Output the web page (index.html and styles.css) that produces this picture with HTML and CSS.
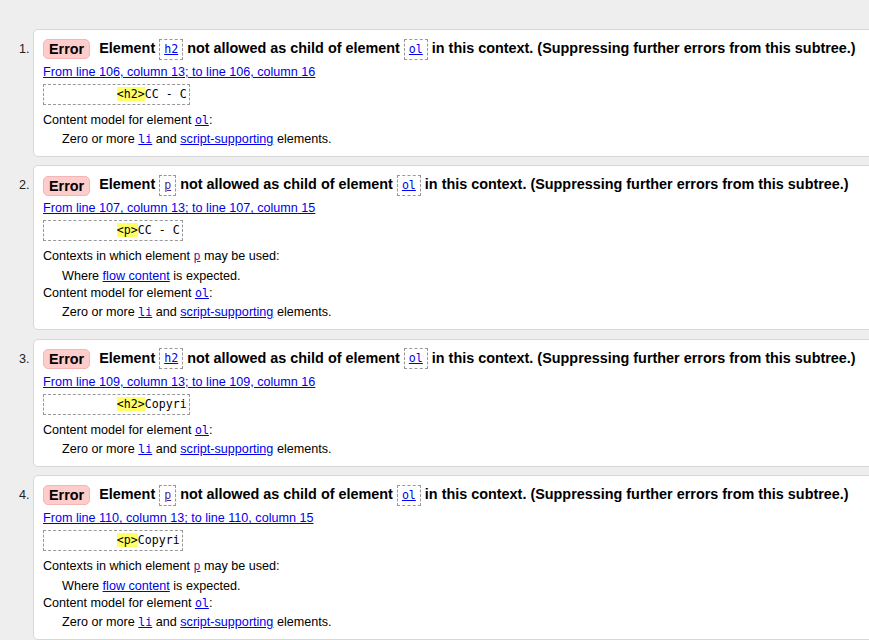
FILE: index.html
```html
<!DOCTYPE html>
<html>
<head>
<meta charset="utf-8">
<title>Validation messages</title>
<link rel="stylesheet" href="styles.css">
</head>
<body>
<ol class="messages">
  <li class="msg">
    <p class="head"><strong class="badge">Error</strong><span class="title">Element <code class="box"><a href="#">h2</a></code> not allowed as child of element <code class="box"><a href="#">ol</a></code> in this context. (Suppressing further errors from this subtree.)</span></p>
    <p class="loc"><a href="#">From line 106, column 13; to line 106, column 16</a></p>
    <code class="extract">          <b>&lt;h2&gt;</b>CC - C</code>
    <dl class="details">
      <dt>Content model for element <code><a href="#">ol</a></code>:</dt>
      <dd>Zero or more <code><a href="#">li</a></code> and <a href="#">script-supporting</a> elements.</dd>
    </dl>
  </li>
  <li class="msg">
    <p class="head"><strong class="badge">Error</strong><span class="title">Element <code class="box"><a href="#" class="visited">p</a></code> not allowed as child of element <code class="box"><a href="#">ol</a></code> in this context. (Suppressing further errors from this subtree.)</span></p>
    <p class="loc"><a href="#">From line 107, column 13; to line 107, column 15</a></p>
    <code class="extract">          <b>&lt;p&gt;</b>CC - C</code>
    <dl class="details">
      <dt>Contexts in which element <code><a href="#" class="visited">p</a></code> may be used:</dt>
      <dd>Where <a href="#">flow content</a> is expected.</dd>
      <dt>Content model for element <code><a href="#">ol</a></code>:</dt>
      <dd>Zero or more <code><a href="#">li</a></code> and <a href="#">script-supporting</a> elements.</dd>
    </dl>
  </li>
  <li class="msg">
    <p class="head"><strong class="badge">Error</strong><span class="title">Element <code class="box"><a href="#">h2</a></code> not allowed as child of element <code class="box"><a href="#">ol</a></code> in this context. (Suppressing further errors from this subtree.)</span></p>
    <p class="loc"><a href="#">From line 109, column 13; to line 109, column 16</a></p>
    <code class="extract">          <b>&lt;h2&gt;</b>Copyri</code>
    <dl class="details">
      <dt>Content model for element <code><a href="#">ol</a></code>:</dt>
      <dd>Zero or more <code><a href="#">li</a></code> and <a href="#">script-supporting</a> elements.</dd>
    </dl>
  </li>
  <li class="msg">
    <p class="head"><strong class="badge">Error</strong><span class="title">Element <code class="box"><a href="#" class="visited">p</a></code> not allowed as child of element <code class="box"><a href="#">ol</a></code> in this context. (Suppressing further errors from this subtree.)</span></p>
    <p class="loc"><a href="#">From line 110, column 13; to line 110, column 15</a></p>
    <code class="extract">          <b>&lt;p&gt;</b>Copyri</code>
    <dl class="details">
      <dt>Contexts in which element <code><a href="#" class="visited">p</a></code> may be used:</dt>
      <dd>Where <a href="#">flow content</a> is expected.</dd>
      <dt>Content model for element <code><a href="#">ol</a></code>:</dt>
      <dd>Zero or more <code><a href="#">li</a></code> and <a href="#">script-supporting</a> elements.</dd>
    </dl>
  </li>
</ol>
</body>
</html>
```

FILE: styles.css
```css
html, body {
  margin: 0;
  padding: 0;
  background: #eeeeee;
  overflow: hidden;
}

body {
  font-family: "Liberation Sans", Arial, sans-serif;
  font-size: 12.6px;
  color: #000;
}

a {
  color: #0000ee;
  text-decoration: underline;
}

a.visited {
  color: #551a8b;
}

code {
  font-family: "DejaVu Sans Mono", "Liberation Mono", monospace;
  font-size: 11.6px;
}

.messages {
  margin: 0;
  padding: 29px 0 0 33px;
  width: 900px;
}

.msg {
  background: #fff;
  border: 1px solid #d8d8d8;
  border-radius: 5px;
  padding: 6px 9px 8px;
  margin-bottom: 8.4px;
}

.msg::marker {
  color: #222;
  font-size: 12.6px;
}

.head {
  margin: 0;
  height: 24px;
  line-height: 24px;
  font-size: 14.4px;
  white-space: nowrap;
}

.badge {
  display: inline-block;
  vertical-align: middle;
  height: 18px;
  line-height: 18px;
  padding: 0 5px;
  margin-right: 9px;
  background: #ffcccc;
  border: 1px solid #f3b5b5;
  border-radius: 5px;
  font-weight: bold;
}

.title {
  font-weight: bold;
}

.box {
  display: inline-block;
  vertical-align: middle;
  line-height: 19px;
  padding: 0 4px;
  border: 1px dashed #999;
  font-weight: normal;
  font-size: 11.6px;
}

.loc {
  margin: 3px 0 0;
  line-height: 18px;
}

.extract {
  display: block;
  width: max-content;
  margin-top: 3px;
  white-space: pre;
  line-height: 19px;
  padding: 0 2px 0 3px;
  border: 1px dashed #999;
}

.extract b {
  font-weight: normal;
  background: #ffff66;
}

.details {
  margin: 6px 0 0;
  line-height: 18px;
}

.details dt {
  margin: 0;
}

.details dd {
  margin: 2px 0 0 19px;
}

.details dd:last-child {
  margin-top: 1px;
}

.details dd + dt {
  margin-top: -1px;
}
```
